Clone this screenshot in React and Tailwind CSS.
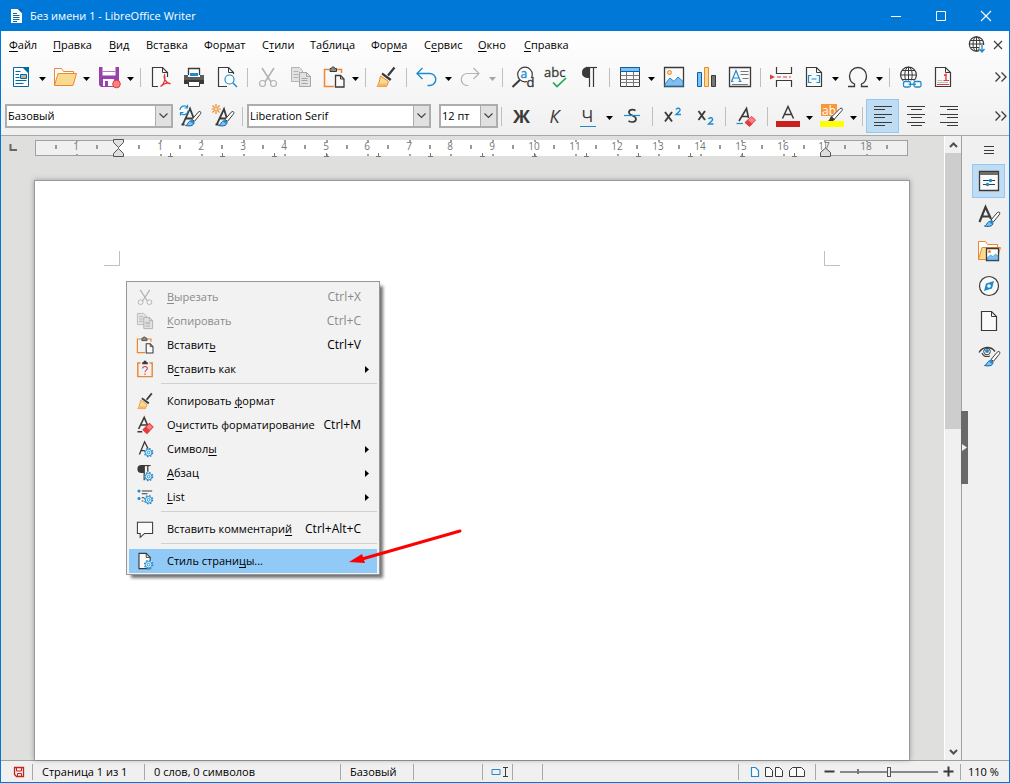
import React from 'react';

const K = '#3a3a38';
const B = '#1e8bcd';
const O = '#ed8733';
const R = '#e03b3f';

function Svg({ w = 24, h = w, size, children }) {
  return (
    <svg width={size || w} height={size || h} viewBox={`0 0 ${w} ${h}`} fill="none" className="block shrink-0 overflow-visible" aria-hidden="true">
      {children}
    </svg>
  );
}

const Brush = ({ x = 0, y = 0 }) => (
  <g transform={`translate(${x} ${y})`}>
    <path d="M7 8.500 13.200 1.200c1-1 2.400-.9 2.600.2.1.7-.2 1.300-.6 1.900L9.500 10.300z" fill="#fff" stroke={K} />
    <path d="M.5 14.500c2-.4 2-1.800 3-3.200 1.200-1.500 3.300-2.200 4.700-1 1.300 1.300.8 3-.8 3.900-2 1-4.700.8-6.900.3z" fill="#83beec" stroke="#0063b1" />
    <path d="M5 10.300 7 9l2.300 2-1.300 2z" fill={B} />
  </g>
);

const Gear = ({ x, y }) => (
  <g transform={`translate(${x} ${y})`} stroke={B}>
    <circle r="5" strokeWidth="1.800" strokeDasharray="2 1.927" fill="#eef6fc" />
    <circle r="4.100" fill="#eef6fc" strokeWidth="1.200" />
    <circle r="1.700" fill="#fff" strokeWidth="1.200" />
  </g>
);

const icons = {
  app: (
    <Svg w={16}>
      <path d="M3 1h7l4 4v10H3z" fill="#fff" />
      <path d="M10 1l4 4V1z" fill="#0b5ca5" />
      <path d="M5 5.500h4M5 7.500h6.500M5 9.500h6.500M5 11.500h6.500M5 13.500h4" stroke="#0369a3" />
    </Svg>
  ),
  newDoc: (
    <Svg>
      <path d="M4.500 2.500h11l4 4v15h-15z" fill="#fff" stroke="#0369a3" />
      <path d="M13 2h7v7z" fill="#0369a3" />
      <path d="M6.500 6.500h5M6.500 9.500h3.500M6.500 12.500h4M6.500 15.500h11M6.500 18.500h8" stroke="#0369a3" />
      <path d="M11.500 9.500h6v4h-6z" fill="#83beec" stroke="#0369a3" />
      <path d="M12 13l3-2 2 1v1z" fill="#f8a33b" />
    </Svg>
  ),
  open: (
    <Svg>
      <path d="M1.500 20.500v-17h7l2 3h10v3" fill="#fff" stroke={O} />
      <path d="M5 8.500h18.500L20 20.500H1.500z" fill="#f8db8f" stroke={O} />
    </Svg>
  ),
  save: (
    <Svg>
      <path d="M2 2h20v20H4l-2-2z" fill="#9a3fae" />
      <path d="M5.500 2h13v8.500h-13z" fill="#fff" />
      <path d="M5.500 6.500h13" stroke="#b27bc0" />
      <path d="M6 14h11v7H6z" fill="#fff" />
      <path d="M8 16h3v5H8z" fill="#9a3fae" />
      <circle cx="19.500" cy="19" r="3.800" fill="#ff8080" stroke={R} />
    </Svg>
  ),
  pdf: (
    <Svg>
      <path d="M9 21.500H3.500v-19h10l5 5V12" fill="#fafafa" stroke={K} strokeWidth="1.200" />
      <path d="M13.500 2.500v5h5" stroke={K} />
      <path d="M15.500 10c-1.500 3 .5 7 6 9-2-1.500-6-1-10 2.500 2.500-2 5.500-6 4-11.500z" stroke={R} strokeWidth="1.300" />
    </Svg>
  ),
  print: (
    <Svg>
      <path d="M6.500 10V3.500h11V10" fill="#fff" stroke={K} strokeWidth="1.300" />
      <path d="M8 8h8v3H8z" fill={B} />
      <path d="M2 10h4v2h12v-2h4v9H2z" fill="#5c5c5a" />
      <path d="M2 15h20v4H2z" fill={K} />
      <path d="M6.500 16.500h11v5h-11z" fill="#fff" stroke={K} />
    </Svg>
  ),
  preview: (
    <Svg>
      <path d="M12 21.500H3.500v-19h10l5 5V9" fill="#fafafa" stroke={K} strokeWidth="1.200" />
      <path d="M13.500 2.500v5h5" stroke={K} />
      <circle cx="14.500" cy="14.500" r="4.500" stroke={B} strokeWidth="1.200" fill="#fff" />
      <path d="M17.800 17.800 22 22" stroke={B} strokeWidth="1.500" />
    </Svg>
  ),
  cut: (
    <Svg>
      <path d="M6 3l9 14M18 3 9 17" stroke="#b4b4b4" strokeWidth="1.600" />
      <circle cx="6.500" cy="18.500" r="3" stroke="#b4b4b4" strokeWidth="1.200" />
      <circle cx="17.500" cy="18.500" r="3" stroke="#b4b4b4" strokeWidth="1.200" />
    </Svg>
  ),
  copy: (
    <Svg>
      <path d="M2.500 2.500h8l3 3v11h-11z" fill="#e2e2e2" stroke="#b4b4b4" />
      <path d="M4.500 6.500h5M4.500 9.500h5M4.500 12.500h5" stroke="#b4b4b4" />
      <path d="M10.500 7.500h7l4 4v10h-11z" fill="#e2e2e2" stroke="#a6a6a6" />
      <path d="M17.500 7.500v4h4M12.500 13.500h6M12.500 15.500h6M12.500 18.500h6" stroke="#a6a6a6" />
    </Svg>
  ),
  paste: (
    <Svg>
      <path d="M12 21.500H2.500V4.500H7m8 0h4.500V8" stroke={O} strokeWidth="1.500" />
      <path d="M8 6.500v-3h1.500a1.600 1.600 0 0 1 3.200 0H14.500v3z" fill="#8c8c8a" stroke={K} />
      <path d="M13.500 10.500h5l3.500 3.500v8h-8.500z" fill="#fafafa" stroke={K} strokeWidth="1.300" />
      <path d="M18.500 10.500v3.500H22" stroke={K} />
    </Svg>
  ),
  pasteAs: (
    <Svg>
      <path d="M6.500 4.500H3v17h18v-17h-3.500" stroke={O} strokeWidth="1.800" />
      <path d="M8.500 6v-2.500H10a2 2 0 0 1 4 0h1.500V6z" fill={K} />
      <path d="M9 11.500c0-3.500 6-3.500 6 0 0 2-3 2-3 4.500M12 17.500v2" stroke={R} strokeWidth="1.300" />
    </Svg>
  ),
  brush: (
    <Svg>
      <path d="M20.500 2.500 14 10.500" stroke={K} strokeWidth="2.200" />
      <path d="M8.500 7.500l9 6.500-1.500 2-8.500-6.500z" fill={K} />
      <path d="M6.500 11l8 5.500-2 5H3c2-2.500 2.500-6 3.500-10.500z" fill="#f8db8f" stroke={O} />
      <path d="M4 18.500h9l-1 3H3z" fill="#fbb568" />
    </Svg>
  ),
  undo: (
    <Svg>
      <path d="M7.500 3 2 8.500 7.500 14M2 8.500h12.500a6 6 0 0 1 .5 12h-2.500" stroke={B} strokeWidth="1.400" />
    </Svg>
  ),
  redo: (
    <Svg>
      <path d="M14.500 3 20 8.500 14.500 14M20 8.500H8.500a6 6 0 0 0-.5 12h1.500" stroke="#b4b4b4" strokeWidth="1.200" />
    </Svg>
  ),
  find: (
    <Svg>
      <circle cx="14" cy="9.500" r="7.300" stroke={K} strokeWidth="1.200" fill="#fff" />
      <path d="M16 13h8v10h-8z" fill="#fafafa" />
      <path d="M8.800 15 1.500 22" stroke={K} strokeWidth="2" />
      <text x="9.500" y="13" fontSize="12" fill={B} stroke={B} strokeWidth=".4" fontFamily="Open Sans, sans-serif">a</text>
      <text x="15.500" y="22" fontSize="13" fill={K} stroke={K} strokeWidth=".4" fontFamily="Open Sans, sans-serif">d</text>
    </Svg>
  ),
  spell: (
    <Svg>
      <text x="0" y="12" fontSize="13" fill={K} stroke={K} strokeWidth=".3" fontFamily="Open Sans, sans-serif">abc</text>
      <path d="M9 17.500l4 4 9-8.500" stroke="#18ab50" strokeWidth="1.700" />
    </Svg>
  ),
  pilcrow: (
    <Svg>
      <path d="M12.500 2.500V22M16.500 2.500V22" stroke={K} strokeWidth="1.200" />
      <path d="M12.500 2H10a5 5 0 0 0-5 5.500 5 5 0 0 0 5 5.500h2.500z" fill={K} />
      <path d="M9 2.500h11" stroke={K} strokeWidth="1.200" />
    </Svg>
  ),
  table: (
    <Svg>
      <path d="M2.500 2.500h19v19h-19z" fill="#fafafa" stroke={K} />
      <path d="M2.500 10.500h19M2.500 14.500h19M2.500 17.500h19M8.500 6.500v15M15.500 6.500v15" stroke="#797774" />
      <path d="M2.500 2.500h19v4h-19z" fill="#83beec" stroke="#0063b1" />
    </Svg>
  ),
  image: (
    <Svg>
      <path d="M2.500 2.500h19v19h-19z" fill="#fafafa" stroke={K} strokeWidth="1.300" />
      <path d="M3 19l5-6 4 3.500 4-4.500 5 4.500V21H3z" fill="#83beec" stroke={B} />
      <circle cx="7.500" cy="7.500" r="2" fill="#f8db8f" stroke={O} />
    </Svg>
  ),
  chart: (
    <Svg>
      <path d="M2.500 7.500h4v14h-4z" fill="#83beec" stroke="#0063b1" />
      <path d="M9.500 2.500h4v19h-4z" fill="#f8db8f" stroke={O} />
      <path d="M16.500 10.500h4v11h-4z" fill="#797774" stroke={K} />
    </Svg>
  ),
  textBox: (
    <Svg>
      <path d="M1.500 2.500h21v19h-21z" fill="#fafafa" stroke={K} strokeWidth="1.300" />
      <path d="M3.500 16.500 8 5.500l4.500 11M5 13h6M3 16.500h2.500M10.500 16.500h3" stroke={B} strokeWidth="1.200" />
      <path d="M12.500 6.500h8M12.500 9.500h8M14.500 13.500h6M4 19.500h16" stroke="#797774" />
    </Svg>
  ),
  pageBreak: (
    <Svg>
      <path d="M7.500 2v6.500h15V2M7.500 22v-6.500h15V22" fill="#fafafa" stroke={K} strokeWidth="1.200" />
      <path d="M8 12h14" stroke={R} strokeWidth="1.200" strokeDasharray="4 2" />
      <path d="M1 9.500l5 2.500-5 2.500z" fill={R} />
    </Svg>
  ),
  field: (
    <Svg>
      <path d="M4.500 2.500h10l5 5v14h-15z" fill="#fafafa" stroke={K} strokeWidth="1.200" />
      <path d="M14.500 2.500v5h5" stroke={K} />
      <path d="M9.500 10.500h-3v7h3M14.500 10.500h3v7h-3M9.500 14h5" stroke={B} strokeWidth="1.200" />
    </Svg>
  ),
  omega: (
    <Svg>
      <path d="M2 21.500h6.500V19C5 17.500 3.500 14.500 3.500 11a8.500 8.500 0 0 1 17 0c0 3.500-1.500 6.500-5 8v2.500H22" stroke={K} strokeWidth="1.300" />
    </Svg>
  ),
  link: (
    <Svg>
      <circle cx="10.500" cy="10" r="7.900" stroke={K} strokeWidth="1.200" fill="#fafafa" />
      <ellipse cx="10.500" cy="10" rx="3.700" ry="7.900" stroke={K} />
      <path d="M10.500 2v16M2.500 10h16M4 5.500h13M4 14.500h13" stroke={K} />
      <rect x="4.500" y="15.500" width="20" height="8" fill="#fafafa" />
      <rect x="5.500" y="16.500" width="7" height="5.500" rx="1.500" stroke={B} strokeWidth="1.300" />
      <rect x="16" y="16.500" width="7" height="5.500" rx="1.500" stroke={B} strokeWidth="1.300" />
      <path d="M10.500 19.300h7.500" stroke={B} strokeWidth="1.300" />
    </Svg>
  ),
  footnote: (
    <Svg>
      <path d="M4.500 2.500h10l5 5v14h-15z" fill="#fafafa" stroke={K} strokeWidth="1.200" />
      <path d="M14.500 2.500v5h5" stroke={K} />
      <path d="M13 10.500l2-1V15" stroke={R} strokeWidth="1.400" />
      <path d="M12.500 15.500H18M6 19.500h12" stroke={R} strokeWidth="1.200" />
      <path d="M6.500 15.500h5M6.500 17.500H17" stroke="#bababa" />
    </Svg>
  ),
  chevrons: (
    <Svg w={14}>
      <path d="M1.500 2.500 6 7l-4.500 4.500M7.500 2.500 12 7l-4.500 4.500" stroke={K} strokeWidth="1.300" />
    </Svg>
  ),
  updateStyle: (
    <Svg>
      <path d="M3.500 20.500h3M5 20 12 4.500l4.500 12M8 14.500h6.500" stroke={K} strokeWidth="1.800" />
      <circle cx="5.500" cy="5.500" r="5" fill="#fafafa" />
      <path d="M2 6a4.200 4.200 0 0 1 7.500-2.500M9.500.8V4H6.500M10 6.500a4.200 4.200 0 0 1-7.500 2.500M2.500 11.500V8.500h3" stroke={B} strokeWidth="1.200" />
      <Brush x={7} y={7} />
    </Svg>
  ),
  newStyle: (
    <Svg>
      <path d="M4.500 20.500h3M6 20 13 5l3.500 11.500M9 14.500h6" stroke={K} strokeWidth="1.800" />
      <circle cx="5" cy="5" r="2.200" fill="#f8db8f" stroke={O} />
      <path d="M5 0v2M5 8v2M.5 5h2M8 5h2M1.500 1.500l1.500 1.500M7 7 8.500 8.500M8.500 1.500 7 3M1.500 8.500 3 7" stroke={O} strokeWidth="1.200" />
      <Brush x={7} y={7} />
    </Svg>
  ),
  strike: (
    <Svg>
      <path d="M15.500 6.500c-3-1.500-7-.8-6.500 2.300.5 3 7 2.700 7 6.200 0 3.300-4.500 3.700-7.500 2" stroke={K} strokeWidth="1.700" />
      <path d="M4 11.500h16" stroke={B} strokeWidth="1.200" />
    </Svg>
  ),
  superscript: (
    <Svg>
      <path d="M4 8l7 9.500M11 8l-7 9.500" stroke={K} strokeWidth="1.900" />
      <path d="M15 5.500c1-2 4.500-1.500 4 .8-.3 1.500-2.500 2.500-4 4.200h5" stroke={B} strokeWidth="1.400" />
    </Svg>
  ),
  subscript: (
    <Svg>
      <path d="M4.500 7l6.500 9M11 7l-6.500 9" stroke={K} strokeWidth="1.900" />
      <path d="M14.500 15c1-2 4.500-1.500 4 .8-.3 1.500-2.500 2.500-4 4.200h5" stroke={B} strokeWidth="1.400" />
    </Svg>
  ),
  clear: (
    <Svg>
      <path d="M5 17 12.500 4.500 14.500 14M7.500 12.500h6.500" stroke={K} strokeWidth="1.600" />
      <path d="M2.500 19.500h6.500" stroke={B} strokeWidth="1.200" />
      <path d="M17.500 12.500 21.500 16 15.500 22.500 11 18.500z" fill="#ff8080" stroke={R} />
      <path d="M14 16l4.500 4-3 2.500-4.500-4z" fill={R} />
    </Svg>
  ),
  clearMenu: (
    <Svg>
      <path d="M4 17 11 2.500 15.500 13M7 12h7M2.500 20.500h6" stroke={K} strokeWidth="2" />
      <path d="M17.500 10 22 14.500 14.500 22.500 9.500 18z" fill="#ff8080" stroke={R} strokeWidth="1.300" />
      <path d="M13 14l5 4.500-3.500 4-5-4.500z" fill={R} />
    </Svg>
  ),
  fontColor: (
    <Svg>
      <path d="M6.500 14.500 12 2.500l5.500 12M8 10.500h8" stroke={K} strokeWidth="1.500" />
      <path d="M0 17h24v6H0z" fill="#c9211e" />
    </Svg>
  ),
  highlight: (
    <Svg>
      <path d="M1 0h16v12H1z" fill="#f8983a" />
      <text x="2" y="10.500" fontSize="12" fill="#fff" fontFamily="Open Sans, sans-serif">ab</text>
      <path d="M0 17h24v6H0z" fill="#ff0" />
      <path d="M11.500 13l8.500-8.500c2-1 3 .5 2 2L14 15.500z" fill="#fff" stroke={K} />
      <path d="M11 12l4 3.500-2 1.500H8c1.500-1 2-3 3-5z" fill={K} />
    </Svg>
  ),
  alignLeft: (
    <Svg>
      <path d="M3 2.500h18M3 5.500h11M3 10.500h18M3 13.500h11M3 18.500h18M3 21.500h11" stroke={K} strokeWidth="1.200" />
    </Svg>
  ),
  alignCenter: (
    <Svg>
      <path d="M3 2.500h18M7 5.500h11M3 10.500h18M7 13.500h11M3 18.500h18M7 21.500h11" stroke={K} strokeWidth="1.200" />
    </Svg>
  ),
  alignRight: (
    <Svg>
      <path d="M3 2.500h18M10 5.500h11M3 10.500h18M10 13.500h11M3 18.500h18M10 21.500h11" stroke={K} strokeWidth="1.200" />
    </Svg>
  ),
  properties: (
    <Svg>
      <path d="M2.500 2.500h19v19h-19z" fill="#fafafa" stroke={K} strokeWidth="1.300" />
      <path d="M3 3h18v3H3z" fill="#6e6c69" />
      <path d="M6 11.500h12M6 15.500h12" stroke={K} />
      <circle cx="13.500" cy="11.500" r="1.700" fill={B} />
      <circle cx="10.500" cy="15.500" r="1.700" fill={B} />
    </Svg>
  ),
  styles: (
    <Svg>
      <path d="M2.500 18 8.500 3l5.500 12M5 12.500h7" stroke={K} strokeWidth="2.100" />
      <Brush x={7} y={7.500} />
    </Svg>
  ),
  gallery: (
    <Svg>
      <path d="M1.500 20.500v-18h7l2 3h10v3" fill="#fff" stroke={O} />
      <path d="M5 8.500h18.500l-3.500 12H1.500z" fill="#f8db8f" stroke={O} />
      <path d="M9.500 9.500h12v12h-12z" fill="#fff" stroke={K} strokeWidth="1.300" />
      <path d="M10.500 18.500l3-2.500 2.500 1.500 2.500-2.500 2.500 2v4h-10.500z" fill="#83beec" stroke={B} strokeWidth=".6" />
      <circle cx="12.500" cy="12.500" r="1.500" fill={O} />
    </Svg>
  ),
  navigator: (
    <Svg>
      <circle cx="12" cy="12" r="9.500" stroke={K} strokeWidth="1.200" fill="#fafafa" />
      <path d="M17 7l-2 7.500-8 2.500 2-7.500z" fill={B} />
      <circle cx="12" cy="12" r="1.800" fill="#fff" />
    </Svg>
  ),
  page: (
    <Svg>
      <path d="M4.500 2.500h10l5 5v14h-15z" fill="#fafafa" stroke={K} strokeWidth="1.200" />
      <path d="M14.500 2.500v5h5" stroke={K} />
    </Svg>
  ),
  inspector: (
    <Svg>
      <path d="M2 8.500c4-6.500 12-6.500 16-1" stroke={K} strokeWidth="1.300" />
      <path d="M5 9c1.500 3.500 5 4 8 3" stroke={K} strokeWidth="1.100" />
      <circle cx="10" cy="7.500" r="3.300" fill="#fff" stroke={K} />
      <circle cx="10" cy="7" r="2" fill={B} />
      <Brush x={7} y={7} />
    </Svg>
  ),
  menu: (
    <Svg w={12}>
      <path d="M1 2.500h10M1 6.500h10M1 9.500h10" stroke={K} />
    </Svg>
  ),
  globe: (
    <Svg w={18}>
      <circle cx="8.500" cy="8" r="7.200" stroke={K} strokeWidth="1.200" fill="#fafafa" />
      <ellipse cx="8.500" cy="8" rx="3.500" ry="7.200" stroke={K} />
      <path d="M8.500 1v14M1.500 8H16M2.500 4.500h12M2.500 11.500h12" stroke={K} />
      <path d="M11.500 9h6v8h-6z" fill="#fafafa" />
      <path d="M14 9v7M11.500 13l2.500 3 2.500-3" stroke={B} strokeWidth="1.300" />
    </Svg>
  ),
  close: (
    <Svg w={10}>
      <path d="M1 1l8 8M9 1 1 9" stroke={K} strokeWidth="1.100" />
    </Svg>
  ),
  charStyle: (
    <Svg>
      <path d="M5 19 11.500 3l4.500 9M7 14h5" stroke={K} strokeWidth="1.700" />
      <Gear x={16.500} y={16.500} />
    </Svg>
  ),
  paraStyle: (
    <Svg>
      <path d="M11 2.500V21M15.500 2.500v8" stroke={K} strokeWidth="1.600" />
      <path d="M11 2H7.500a5 5 0 1 0 0 10H11z" fill={K} />
      <path d="M7 2.700h12" stroke={K} strokeWidth="1.400" />
      <Gear x={16.500} y={16.500} />
    </Svg>
  ),
  list: (
    <Svg>
      <circle cx="4.500" cy="4.500" r="1.900" fill={B} />
      <circle cx="4.500" cy="14" r="1.900" fill={B} />
      <path d="M8 4.500h13M8 8h7M8 13h3M8 17h2" stroke={K} strokeWidth="1.300" />
      <Gear x={16.500} y={15.500} />
    </Svg>
  ),
  comment: (
    <Svg>
      <path d="M2.500 3.500h19v14H11.500L6 22.500v-5H2.500z" fill="#fafafa" stroke={K} strokeWidth="1.300" />
    </Svg>
  ),
  pageStyle: (
    <Svg>
      <path d="M4.500 2.500h9l5 5v14h-14z" fill="#fafafa" stroke={K} strokeWidth="1.400" />
      <path d="M13.500 2.500v5h5" stroke={K} strokeWidth="1.200" />
      <Gear x={16.500} y={16.500} />
    </Svg>
  ),
};

function Caret({ dim }) {
  return (
    <button type="button" aria-label="Ещё" className="flex h-8 w-[11px] shrink-0 items-center justify-center pt-1">
      <Svg w={7} h={4}>
        <path d="M0 0h7L3.500 4z" fill={dim ? '#a6a6a6' : '#000'} />
      </Svg>
    </button>
  );
}

function Tool({ label, children, active }) {
  return (
    <button
      type="button"
      aria-label={label}
      className={
        active
          ? 'flex h-[34px] w-[33px] shrink-0 items-center justify-center border border-[#90c8f6] bg-[#c0dcf3]'
          : 'flex h-[34px] w-[33px] shrink-0 items-center justify-center'
      }
    >
      {children}
    </button>
  );
}

function Group({ className, children }) {
  return (
    <div className={`flex shrink-0 items-center ${className}`}>
      <span className="mr-[3px] h-[19px] w-px bg-[#bfbfbf]" />
      {children}
    </div>
  );
}

function Combo({ label, value, className }) {
  return (
    <label className={`relative block h-6 shrink-0 border-2 border-[#adadad] bg-white ${className}`}>
      <span className="sr-only">{label}</span>
      <select defaultValue={value} className="block h-5 w-full appearance-none bg-white pl-px text-[11px] leading-5 text-black outline-none">
        <option>{value}</option>
      </select>
      <span className="pointer-events-none absolute inset-y-0 right-0 flex w-4 items-center justify-center border-l border-[#adadad] bg-[#e1e1e1]">
        <Svg w={9} h={6}>
          <path d="M.5.500 4.500 4.500l4-4" stroke="#444" strokeWidth="1.200" />
        </Svg>
      </span>
    </label>
  );
}

const menus = [
  ['', 'Ф', 'айл', 'w-11'],
  ['', 'П', 'равка', 'w-14'],
  ['', 'В', 'ид', 'w-[37px]'],
  ['Вст', 'а', 'вка', 'w-[58px]'],
  ['Фор', 'м', 'ат', 'w-[58px]'],
  ['С', 'т', 'или', 'w-12'],
  ['Та', 'б', 'лица', 'w-[61px]'],
  ['Фор', 'м', 'а', 'w-[53px]'],
  ['С', 'е', 'рвис', 'w-[54px]'],
  ['', 'О', 'кно', 'w-[46px]'],
  ['', 'С', 'правка', 'w-[50px]'],
];

const context = [
  { icon: 'cut', t: ['', 'В', 'ырезать'], key: 'Ctrl+X', off: true },
  { icon: 'copy', t: ['', 'К', 'опировать'], key: 'Ctrl+C', off: true },
  { icon: 'paste', t: ['Вставит', 'ь', ''], key: 'Ctrl+V' },
  { icon: 'pasteAs', t: ['В', 'с', 'тавить как'], sub: true },
  null,
  { icon: 'brush', t: ['Копировать ', 'ф', 'ормат'] },
  { icon: 'clearMenu', t: ['О', 'ч', 'истить форматирование'], key: 'Ctrl+M' },
  { icon: 'charStyle', t: ['Символ', 'ы', ''], sub: true },
  { icon: 'paraStyle', t: ['', 'А', 'бзац'], sub: true },
  { icon: 'list', t: ['', 'L', 'ist'], sub: true },
  null,
  { icon: 'comment', t: ['Вставить комментари', 'й', ''], key: 'Ctrl+Alt+C' },
  null,
  { icon: 'pageStyle', t: ['Стиль страни', 'ц', 'ы...'], hot: true },
];

function Mnemonic({ t }) {
  return (
    <span className="whitespace-pre">
      {t[0]}
      <span className="underline underline-offset-2">{t[1]}</span>
      {t[2]}
    </span>
  );
}

function ContextMenu() {
  return (
    <div role="menu" className="absolute top-[145px] left-[125px] w-[254px] border border-[#979797] bg-[#f2f2f2] px-0.5 pt-[3px] pb-px shadow-[4px_4px_3px_-1px_rgba(0,0,0,0.55)]">
      {context.map((m, i) =>
        m ? (
          <button
            key={i}
            type="button"
            role="menuitem"
            disabled={m.off}
            className={`flex h-6 w-full items-center pl-[6px] text-left ${m.hot ? 'bg-[#91c9f7]' : ''} ${m.off ? 'text-[#8a8a8a]' : 'text-black'}`}
          >
            <span className="flex w-5 scale-80 justify-center">{icons[m.icon]}</span>
            <span className="ml-3 flex-1">
              <Mnemonic t={m.t} />
            </span>
            {m.key && <span className="mr-4 text-[12px]">{m.key}</span>}
            {m.sub && (
              <span className="mr-2">
                <Svg w={4} h={7}>
                  <path d="M0 0v7l4-3.500z" fill="#000" />
                </Svg>
              </span>
            )}
          </button>
        ) : (
          <div key={i} className="flex h-2 pt-[2px] pl-8">
            <span className="h-px w-full bg-[#d0d0d0]" />
          </div>
        ),
      )}
    </div>
  );
}

const CM = 41.55;
const range = (n) => Array.from({ length: n }, (_, i) => i);

function Ruler() {
  const x0 = 84;
  return (
    <svg width="876" height="20" viewBox="0 0 876 20" className="block shrink-0" aria-label="Линейка">
      <rect x="1" y="2" width="873" height="16" fill="#fff" />
      <rect x="1.500" y="2.500" width="83" height="15" fill="#f0f0f0" stroke="#a0a0a0" />
      <rect x="791.500" y="2.500" width="82" height="15" fill="#f0f0f0" stroke="#a0a0a0" />
      {range(20).map((i) => {
        const x = Math.round(x0 + (i - 1) * CM);
        return i === 1 ? null : (
          <g key={i} fill="#a0a0a0">
            <rect x={x} y="2" width="2" height="2" />
            <rect x={x} y="16" width="2" height="2" />
            <text x={x} y="12" textAnchor="middle" fontSize="10" fill="#757575">{Math.abs(i - 1)}</text>
          </g>
        );
      })}
      {range(21).map((i) => (
        <rect key={i} x={Math.round(x0 + (i - 1.500) * CM) - 1} y="7" width="2" height="4" fill="#999" />
      ))}
      {range(13).map((i) => {
        const x = Math.round(x0 + (i + 1) * 52);
        return <path key={i} d={`M${x + 0.5} 15v3M${x - 2} 18.500h5`} stroke="#777" />;
      })}
      <path d="M79.500 1.500h10v3l-5 5-5-5zM79.500 18.500h10v-3l-5-5-5 5zM786.500 18.500h10v-4l-5-4.500-5 4.500z" fill="#dfdfdd" stroke="#555" />
    </svg>
  );
}

function StatusSep() {
  return <span className="h-4 w-px shrink-0 bg-[#a8a8a8]" />;
}

export default function App() {
  return (
    <div className="flex min-h-screen flex-col overflow-hidden border border-t-0 border-[#0078d7] bg-[#f0f0f0] font-['Open_Sans','Noto_Sans',sans-serif] text-[11px] leading-4 text-black">
      <header className="flex h-[31px] items-center bg-[#0078d7] text-white">
        <span className="ml-[7px]">{icons.app}</span>
        <h1 className="ml-[6px] flex-1">Без имени 1 - LibreOffice Writer</h1>
        <button type="button" aria-label="Свернуть" className="flex h-full w-[45px] items-center justify-center">
          <Svg w={10}><path d="M0 5.500h10" stroke="#fff" /></Svg>
        </button>
        <button type="button" aria-label="Развернуть" className="flex h-full w-[45px] items-center justify-center">
          <Svg w={10}><path d="M.5.500h9v9h-9z" stroke="#fff" /></Svg>
        </button>
        <button type="button" aria-label="Закрыть" className="flex h-full w-[46px] items-center justify-center">
          <Svg w={10}><path d="M0 0l10 10M10 0 0 10" stroke="#fff" strokeWidth="1.200" /></Svg>
        </button>
      </header>

      <div className="border-b border-[#a8a8a8] bg-linear-to-b from-white to-[#f0f0f0]">
        <nav className="flex h-7 items-center pl-2">
          {menus.map((m) => (
            <button key={m.join('')} type="button" className={`shrink-0 text-left ${m[3]}`}>
              <Mnemonic t={m} />
            </button>
          ))}
          <span className="flex-1" />
          <button type="button" aria-label="Обновления" className="mr-[7px]">{icons.globe}</button>
          <button type="button" aria-label="Закрыть документ" className="mr-[6px]">{icons.close}</button>
        </nav>

        <div role="toolbar" aria-label="Стандартная" className="flex h-9 items-center">
          <div className="flex w-[139px] shrink-0 items-center pl-[3px]">
            <Tool label="Создать">{icons.newDoc}</Tool>
            <Caret />
            <Tool label="Открыть">{icons.open}</Tool>
            <Caret />
            <Tool label="Сохранить">{icons.save}</Tool>
            <Caret />
          </div>
          <Group className="w-[107px]">
            <Tool label="Экспорт в PDF">{icons.pdf}</Tool>
            <Tool label="Печать">{icons.print}</Tool>
            <Tool label="Просмотр печати">{icons.preview}</Tool>
          </Group>
          <Group className="w-[118px]">
            <Tool label="Вырезать">{icons.cut}</Tool>
            <Tool label="Копировать">{icons.copy}</Tool>
            <Tool label="Вставить">{icons.paste}</Tool>
            <Caret />
          </Group>
          <Group className="w-[41px]">
            <Tool label="Копировать формат">{icons.brush}</Tool>
          </Group>
          <Group className="w-24">
            <Tool label="Отменить">{icons.undo}</Tool>
            <Caret />
            <Tool label="Повторить">{icons.redo}</Tool>
            <Caret dim />
          </Group>
          <Group className="w-[107px]">
            <Tool label="Найти и заменить">{icons.find}</Tool>
            <Tool label="Орфография">{icons.spell}</Tool>
            <Tool label="Непечатаемые символы">{icons.pilcrow}</Tool>
          </Group>
          <Group className="w-[151px]">
            <Tool label="Таблица">{icons.table}</Tool>
            <Caret />
            <Tool label="Изображение">{icons.image}</Tool>
            <Tool label="Диаграмма">{icons.chart}</Tool>
            <Tool label="Текстовое поле">{icons.textBox}</Tool>
          </Group>
          <Group className="w-[129px]">
            <Tool label="Разрыв страницы">{icons.pageBreak}</Tool>
            <Tool label="Поле">{icons.field}</Tool>
            <Caret />
            <Tool label="Специальные символы">{icons.omega}</Tool>
            <Caret />
          </Group>
          <Group className="flex-1">
            <Tool label="Гиперссылка">{icons.link}</Tool>
            <Tool label="Сноска">{icons.footnote}</Tool>
          </Group>
          <button type="button" aria-label="Больше" className="mr-px">{icons.chevrons}</button>
        </div>

        <div role="toolbar" aria-label="Форматирование" className="flex h-10 items-center pt-[2px]">
          <Combo label="Стиль абзаца" value="Базовый" className="ml-1 w-42" />
          <div className="flex w-[69px] shrink-0 items-center">
            <Tool label="Обновить стиль">{icons.updateStyle}</Tool>
            <Tool label="Создать стиль">{icons.newStyle}</Tool>
          </div>
          <Group className="w-[5px]" />
          <Combo label="Шрифт" value="Liberation Serif" className="mr-2 w-46" />
          <Combo label="Размер шрифта" value="12 пт" className="mr-[3px] w-[59px]" />
          <Group className="w-[151px]">
            <Tool label="Полужирный"><span className="text-[18px] leading-6 font-bold text-[#3a3a38]">Ж</span></Tool>
            <Tool label="Курсив"><span className="text-[18px] leading-6 font-medium text-[#3a3a38] italic">К</span></Tool>
            <Tool label="Подчёркнутый">
              <span className="w-4 border-b border-[#1e8bcd] text-center text-[17px] leading-5 font-medium text-[#3a3a38]">Ч</span>
            </Tool>
            <Caret />
            <Tool label="Зачёркнутый">{icons.strike}</Tool>
          </Group>
          <Group className="w-[73px]">
            <Tool label="Надстрочный">{icons.superscript}</Tool>
            <Tool label="Подстрочный">{icons.subscript}</Tool>
          </Group>
          <Group className="w-[42px]">
            <Tool label="Очистить форматирование">{icons.clear}</Tool>
          </Group>
          <Group className="w-[95px]">
            <Tool label="Цвет шрифта">{icons.fontColor}</Tool>
            <Caret />
            <Tool label="Цвет выделения">{icons.highlight}</Tool>
            <Caret />
          </Group>
          <Group className="flex-1">
            <Tool label="По левому краю" active>{icons.alignLeft}</Tool>
            <Tool label="По центру">{icons.alignCenter}</Tool>
            <Tool label="По правому краю">{icons.alignRight}</Tool>
          </Group>
          <button type="button" aria-label="Больше" className="mr-px">{icons.chevrons}</button>
        </div>
      </div>

      <div className="flex flex-1">
        <main className="relative flex flex-1 flex-col bg-[#dfdfdd]">
          <div className="flex items-center pt-[2px]">
            <span className="flex w-[33px] justify-center pr-[9px]">
              <Svg w={8}><path d="M1.500 0v6H8" stroke="#666" strokeWidth="2" /></Svg>
            </span>
            <Ruler />
          </div>
          <div className="mx-[33px] mt-[22px] flex flex-1 pr-px">
            <div className="flex flex-1 justify-between border border-b-0 border-[#999] bg-white px-[69px] pt-[70px] shadow-[0_0_5px_rgba(0,0,0,0.3)]">
              <span className="h-[15px] w-4 border-r border-b border-[#c0c0c0]" />
              <span className="h-[15px] w-4 border-b border-l border-[#c0c0c0]" />
            </div>
          </div>
          <ContextMenu />
          <div className="pointer-events-none absolute top-[390px] left-[347px]">
            <Svg w={114} h={40}>
              <path d="M112 5 14 33" stroke="#fe0000" strokeWidth="3" strokeLinecap="round" />
              <path d="M1 36 14 28l3 9z" fill="#fe0000" />
            </Svg>
          </div>
        </main>

        <div className="flex w-[17px] flex-col border-l border-white bg-[#f0f0f0]">
          <button type="button" aria-label="Вверх" className="flex h-[17px] items-center justify-center">
            <Svg w={9} h={6}><path d="M1 5l3.500-3.500L8 5" stroke="#505050" strokeWidth="2" /></Svg>
          </button>
          <div className="flex-1">
            <div className="h-[276px] bg-[#cdcdcd]" />
          </div>
          <button type="button" aria-label="Вниз" className="flex h-[17px] items-center justify-center">
            <Svg w={9} h={6}><path d="M1 1l3.500 3.500L8 1" stroke="#505050" strokeWidth="2" /></Svg>
          </button>
        </div>

        <aside className="relative flex w-12 flex-col items-end border-l border-[#a0a0a0] pr-1">
          <button type="button" aria-label="Свернуть боковую панель" className="absolute top-[275px] -left-px flex h-[73px] w-[7px] items-center justify-center bg-[#696969]">
            <Svg w={5} h={7}><path d="M0 0v7l5-3.500z" fill="#f0f0f0" /></Svg>
          </button>
          <button type="button" aria-label="Настройки панели" className="flex h-7 w-[33px] items-center justify-center">{icons.menu}</button>
          <div className="flex flex-col gap-px">
            <Tool label="Свойства" active>{icons.properties}</Tool>
            <Tool label="Стили">{icons.styles}</Tool>
            <Tool label="Галерея">{icons.gallery}</Tool>
            <Tool label="Навигатор">{icons.navigator}</Tool>
            <Tool label="Страница">{icons.page}</Tool>
            <Tool label="Инспектор стилей">{icons.inspector}</Tool>
          </div>
        </aside>
      </div>

      <footer className="flex h-[22px] items-center border-t border-[#a0a0a0]">
        <span className="flex w-[31px] shrink-0 justify-center pl-1">
          <Svg w={10}>
            <path d="M.5.500h9v9h-7l-2-2z" stroke="#c9211e" strokeWidth="1.300" />
            <path d="M2.500 1v3h5V1M3.500 9V6.500h4V9" stroke="#c9211e" />
          </Svg>
        </span>
        <StatusSep />
        <span className="w-[111px] shrink-0 pl-[9px]">Страница 1 из 1</span>
        <StatusSep />
        <span className="w-[195px] shrink-0 pl-[9px]">0 слов, 0 символов</span>
        <StatusSep />
        <span className="w-[72px] shrink-0 pl-[9px]">Базовый</span>
        <StatusSep />
        <span className="w-[68px] shrink-0" />
        <StatusSep />
        <span className="flex w-[29px] shrink-0 justify-center pl-1">
          <Svg w={18} h={12}>
            <path d="M1 3.500h8v5H1z" stroke={B} />
            <path d="M12 1.500h5M12 10.500h5M14.500 2v8" stroke={K} />
          </Svg>
        </span>
        <StatusSep />
        <span className="w-[29px] shrink-0" />
        <StatusSep />
        <span className="flex-1" />
        <StatusSep />
        <span className="flex w-19 shrink-0 items-center gap-[6px] pl-3">
          <Svg w={8} h={10}><path d="M.5.500h4l3 3v6h-7z" fill="#fff" stroke={B} strokeWidth="1.200" /></Svg>
          <Svg w={18} h={10}><path d="M.5.500h4l3 3v6h-7zM10.500.500h4l3 3v6h-7z" fill="#fafafa" stroke={K} /></Svg>
          <Svg w={16} h={10}><path d="M.5 9.500v-6l3-3h4v9zM7.500.500h5l3 3v6h-8z" fill="#fafafa" stroke={K} /></Svg>
        </span>
        <StatusSep />
        <div className="flex w-36 shrink-0 items-center pl-2">
          <button type="button" aria-label="Уменьшить"><Svg w={11}><path d="M.5 5.500h10" stroke={K} strokeWidth="2" /></Svg></button>
          <label className="relative mx-[5px] flex h-4 w-[98px] items-center">
            <span className="sr-only">Масштаб</span>
            <span className="absolute top-[7px] left-0 h-[2px] w-full bg-[#888]" />
            <span className="absolute top-[5px] left-[17px] h-[5px] w-[2px] bg-[#777]" />
            <input
              type="range"
              min="0"
              max="100"
              defaultValue="50"
              className="relative h-4 w-full appearance-none bg-transparent [&::-webkit-slider-thumb]:h-[10px] [&::-webkit-slider-thumb]:w-1 [&::-webkit-slider-thumb]:appearance-none [&::-webkit-slider-thumb]:border [&::-webkit-slider-thumb]:border-[#555] [&::-webkit-slider-thumb]:bg-[#eee]"
            />
          </label>
          <button type="button" aria-label="Увеличить"><Svg w={11}><path d="M.5 5.500h10M5.500.500v10" stroke={K} strokeWidth="2" /></Svg></button>
        </div>
        <StatusSep />
        <span className="w-12 shrink-0 pl-[7px] whitespace-nowrap">110 %</span>
      </footer>
    </div>
  );
}
